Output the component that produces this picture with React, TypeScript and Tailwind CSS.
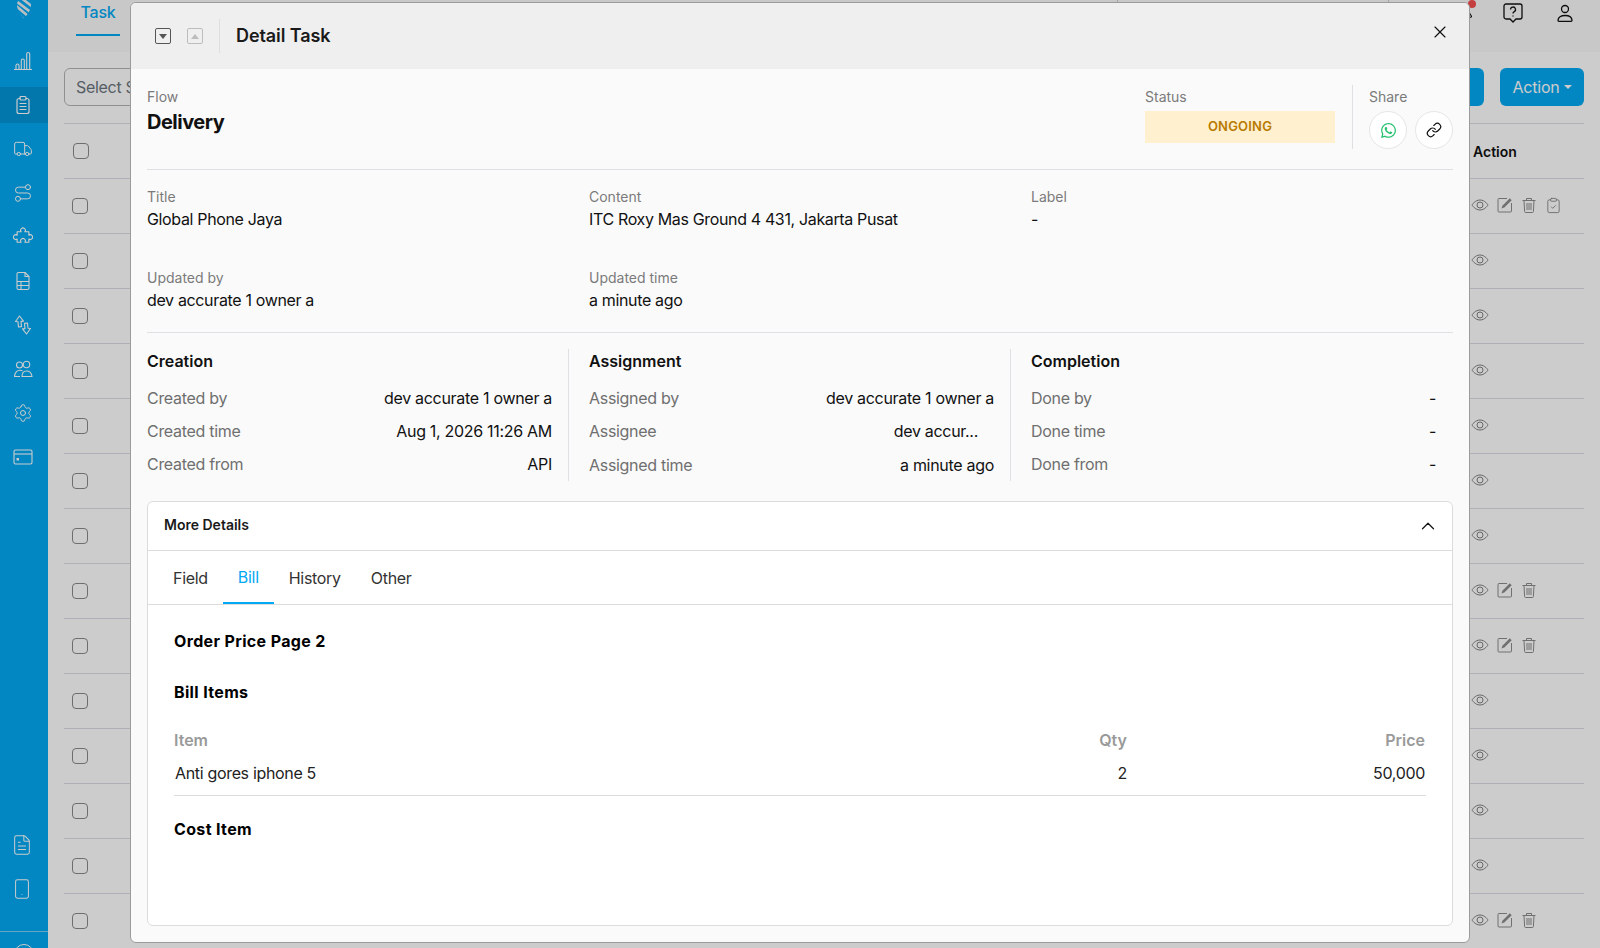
import { ChevronUp, ClipboardCheck, FileText, Link, Settings, Smartphone, Bell, Route, Truck, X } from "lucide-react";
import { FaWhatsapp } from "react-icons/fa";

const BarsIcon = () => (
  <svg width="20" height="20" viewBox="0 0 20 20" fill="none" stroke="currentColor" strokeWidth="1.1">
    <path d="M1 18.500h18M3 18.500v-4a1.500 1.500 0 0 1 3 0v4M8.300 18.500V9.500a1.500 1.500 0 0 1 3 0v9M13.700 18.500V3a1.500 1.500 0 0 1 3 0v15.500" />
  </svg>
);

const ClipboardIcon = () => (
  <svg width="20" height="20" viewBox="0 0 20 20" fill="none" stroke="currentColor" strokeWidth="1.2" strokeLinecap="round">
    <path d="M7 3.500H6a2 2 0 0 0-2 2v11a2 2 0 0 0 2 2h8a2 2 0 0 0 2-2v-11a2 2 0 0 0-2-2h-1" />
    <rect x="7" y="1.500" width="6" height="3.500" rx="1" />
    <path d="M7 8.500h6M7 11.500h6M7 14.500h6" />
  </svg>
);

const PuzzleIcon = () => (
  <svg width="20" height="20" viewBox="1.500 1.500 17 17" fill="none" stroke="currentColor" strokeWidth="0.95" strokeLinejoin="round">
    <path d="M5 5.500h3.400a2 2 0 1 1 3.200 0H15v3a2 2 0 1 1 0 3.200v2.800h-3.400a2 2 0 1 0-3.200 0H5v-2.800a2 2 0 1 1 0-3.200z" />
  </svg>
);

const FileTableIcon = () => (
  <svg width="20" height="20" viewBox="0 0 20 20" fill="none" stroke="currentColor" strokeWidth="1.1" strokeLinejoin="round">
    <path d="M5.500 1.500H12l4 4v11.500a1.500 1.500 0 0 1-1.500 1.500h-9A1.500 1.500 0 0 1 4 17V3a1.500 1.500 0 0 1 1.500-1.500z" />
    <path d="M12 1.500v4h4M4 10.500h12M4 14.500h12M8 10.500v8" />
  </svg>
);

const SwapIcon = () => (
  <svg width="20" height="20" viewBox="0 0 20 20" fill="none" stroke="currentColor" strokeWidth="1.1" strokeLinejoin="round">
    <path d="M6.500 1 2.500 6.500 5 6.800 5.500 12l3-.4-.5-5.200 2.500-.3z" />
    <path d="M13.500 19l4-5.500-2.500-.3-.5-5.200-3 .4.500 5.200-2.500.3z" />
  </svg>
);

const UsersIcon = () => (
  <svg width="20" height="20" viewBox="0 0 20 20" fill="none" stroke="currentColor" strokeWidth="1.1" strokeLinejoin="round">
    <circle cx="6.500" cy="6" r="3" />
    <circle cx="13.500" cy="5.500" r="3.200" />
    <path d="M9 17.500c0-3.500 2-5.500 4.500-5.500s5 2 5.500 5.500z" />
    <path d="M9.500 11.800c-.8-.4-1.600-.6-2.500-.6-3 0-5 2.300-5.500 6.300H7" />
  </svg>
);

const CardIcon = () => (
  <svg width="20" height="20" viewBox="0 0 20 20" fill="none" stroke="currentColor" strokeWidth="1.1">
    <rect x="1" y="3" width="18" height="14" rx="1.500" />
    <path d="M1 7h18" />
    <rect x="3.500" y="11" width="2.500" height="2.500" fill="currentColor" stroke="none" />
  </svg>
);

const Logo = () => (
  <svg width="18" height="20" viewBox="0 0 18 20" fill="none">
    <defs>
      <clipPath id="logo-shape">
        <path d="M2 4.500C2-3.500 16-3.500 16 4.500c0 6-4 10.500-7 14-3-3.500-7-8-7-14z" />
      </clipPath>
    </defs>
    <g clipPath="url(#logo-shape)" stroke="#e8eef2" strokeWidth="2.600">
      <path d="M0 1 8-5M-1 8 13-3M1 13 17 1M5 16l13-11M8 21l10-10" transform="matrix(-1 0 0 1 18 0)" />
    </g>
  </svg>
);

const HelpIcon = () => (
  <svg width="22" height="22" viewBox="0 0 22 22" fill="none" stroke="currentColor" strokeWidth="1.3">
    <path d="M4 2h14a2 2 0 0 1 2 2v11a2 2 0 0 1-2 2h-4l-3 3-3-3H4a2 2 0 0 1-2-2V4a2 2 0 0 1 2-2z" />
    <path d="M8.500 7.500a2.500 2.500 0 1 1 3.500 2.300c-.7.3-1 .8-1 1.700" />
    <path d="M11 13.500v1" />
  </svg>
);

const PersonIcon = () => (
  <svg width="20" height="20" viewBox="0 0 20 20" fill="none" stroke="currentColor" strokeWidth="1.3" strokeLinejoin="round">
    <circle cx="10" cy="6" r="3.500" />
    <path d="M3 17.500c0-3.200 3-5 7-5s7 1.800 7 5c0 .5-.5.8-1 .8H4c-.5 0-1-.3-1-.8z" />
  </svg>
);

const EyeIcon = () => (
  <svg width="18" height="18" viewBox="0 0 18 18" fill="none" stroke="currentColor" strokeWidth="1">
    <path d="M1 9s3-5 8-5 8 5 8 5-3 5-8 5-8-5-8-5z" />
    <circle cx="9" cy="9" r="3" />
  </svg>
);

const EditIcon = () => (
  <svg width="16" height="16" viewBox="0 0 16 16" fill="none" stroke="#8c8c8c" strokeWidth="1">
    <path d="M10 1.500H2a1 1 0 0 0-1 1v11.500a1 1 0 0 0 1 1h11.500a1 1 0 0 0 1-1V6" />
    <path d="M4.500 11.500l.9-2.800L12.800 1.300l1.900 1.900-7.400 7.400z" fill="#8c8c8c" stroke="none" />
  </svg>
);

const TrashIcon = () => (
  <svg width="16" height="16" viewBox="0 0 16 16" fill="none" stroke="#8c8c8c" strokeWidth="1">
    <path d="M1.500 3.500h13M5.500 3.500V1.500h5v2M3 3.500l.6 11a1 1 0 0 0 1 1h6.800a1 1 0 0 0 1-1l.6-11M6 6v7M8 6v7M10 6v7" />
  </svg>
);

const navTop = [
  { icon: <BarsIcon /> },
  { icon: <ClipboardIcon />, active: true },
  { icon: <Truck size={20} strokeWidth={1.2} /> },
  { icon: <Route size={20} strokeWidth={1.2} /> },
  { icon: <PuzzleIcon /> },
  { icon: <FileTableIcon /> },
  { icon: <SwapIcon /> },
  { icon: <UsersIcon /> },
  { icon: <Settings size={20} strokeWidth={1.2} /> },
  { icon: <CardIcon /> },
];

// 0 = eye only, 1 = eye/edit/trash, 2 = all four
const rows = [2, 0, 0, 0, 0, 0, 0, 1, 1, 0, 0, 0, 0, 1];

const Sidebar = () => (
  <aside className="w-12 h-[948px] shrink-0 bg-[#03a9f4] text-white flex flex-col overflow-hidden">
    <div className="h-[43px] flex justify-center shrink-0 pr-px">
      <Logo />
    </div>
    <div className="flex flex-col gap-2">
      {navTop.map((item, i) => (
        <div
          key={i}
          className={`h-9 flex items-center justify-center pr-[2px] ${item.active ? "bg-[#0295d8]" : ""}`}
        >
          {item.icon}
        </div>
      ))}
    </div>
    <div className="mt-auto flex flex-col gap-2">
      <div className="h-9 flex items-center justify-center pr-1">
        <FileText size={22} strokeWidth={1.1} />
      </div>
      <div className="h-9 flex items-center justify-center pr-1">
        <Smartphone size={22} strokeWidth={1.1} />
      </div>
      <div className="mt-4 border-t border-[#7fd0f5] h-[17px] flex justify-center">
        <div className="mt-3 w-5 h-5 shrink-0 rounded-full border border-white" />
      </div>
    </div>
  </aside>
);

const Background = () => (
  <main className="flex-1 min-w-0 h-[948px] overflow-hidden bg-white">
    <div className="h-[52px] bg-[#fafafa] flex items-start pl-7 pr-[25px]">
      <div className="w-11 h-9 border-b-2 border-[#03a9f4] text-[16px] leading-6 tracking-[-0.2px] font-medium text-center text-[#03a9f4]">
        Task
      </div>
      <span className="ml-[997px] h-9 border-l border-[#d0d0d0]" />
      <span className="ml-[270px] h-9 border-l border-[#d0d0d0]" />
      <div className="ml-auto h-[26px] flex items-center text-[#111]">
        <span className="relative">
          <Bell size={20} strokeWidth={1.3} />
          <span className="absolute left-[14px] -top-[3px] w-2 h-2 rounded-full bg-[#f55050]" />
        </span>
        <span className="ml-7">
          <HelpIcon />
        </span>
        <span className="ml-[31px]">
          <PersonIcon />
        </span>
      </div>
    </div>
    <div className="mt-4 px-4 flex gap-4 h-[38px]">
      <div className="w-[300px] border border-[#b5b5b5] rounded-md pl-[11px] flex items-center text-[16px] tracking-[-0.3px] text-[#6c757d]">
        Select S
      </div>
      <div className="ml-auto w-[100px] rounded-md bg-[#03a9f4]" />
      <div className="w-[84px] rounded-md bg-[#03a9f4] flex items-center justify-center gap-1 text-[16px] tracking-[-0.2px] text-white">
        Action
        <span className="w-0 h-0 border-x-4 border-x-transparent border-t-4 border-t-white" />
      </div>
    </div>
    <div className="mt-[17px] mx-4 border-t border-[#dcdde6]">
      <div className="h-[55px] border-b border-[#dcdde6] flex items-center justify-between">
        <span className="ml-[9px] w-4 h-4 rounded-[4px] border border-[#8a8a8a] bg-white" />
        <span className="w-[116px] pl-[5px] text-[14px] font-semibold text-[#111]">Action</span>
      </div>
      {rows.map((kind, i) => (
        <div key={i} className="h-[55px] border-b border-[#dcdde6] flex items-center justify-between">
          <span className="ml-2 w-4 h-4 rounded-[4px] border border-[#8a8a8a] bg-white" />
          <div className="w-[116px] mb-[2px] flex items-center text-[#808080]">
            <span className="w-[24.5px] flex justify-center">
              <EyeIcon />
            </span>
            {kind > 0 && (
              <>
                <span className="w-[24.5px] flex justify-center">
                  <EditIcon />
                </span>
                <span className="w-[24.5px] flex justify-center">
                  <TrashIcon />
                </span>
              </>
            )}
            {kind > 1 && (
              <span className="w-[24.5px] flex justify-center">
                <ClipboardCheck size={17} strokeWidth={1.2} />
              </span>
            )}
          </div>
        </div>
      ))}
    </div>
  </main>
);

const Field = ({ label, value }: { label: string; value: string }) => (
  <div>
    <div className="h-5 text-[14px] leading-5 text-[#7a7a7a]">{label}</div>
    <div className="h-6 text-[16px] leading-6 tracking-[-0.35px] text-[#111]">{value}</div>
  </div>
);

const DetailColumn = ({
  title,
  items,
  className,
}: {
  title: string;
  items: [string, string][];
  className: string;
}) => (
  <div className={className}>
    <div className="h-6 text-[16px] leading-6 font-semibold text-[#111]">{title}</div>
    <div className="mt-[13px] flex flex-col gap-[9px]">
      {items.map(([label, value]) => (
        <div
          key={label}
          className={`h-6 flex justify-between text-[16px] leading-6 tracking-[-0.3px] ${
            label === "Assigned time" ? "mt-px" : ""
          }`}
        >
          <span className="text-[#6f6f6f]">{label}</span>
          <span className={`text-[#111] ${value === "dev accur..." ? "pr-4" : ""}`}>{value}</span>
        </div>
      ))}
    </div>
  </div>
);

const Modal = () => (
  <div className="absolute left-[130px] top-[2px] w-[1340px] h-[941px] rounded-md bg-[#fafafa] border border-[#9b9b9b] flex flex-col overflow-hidden">
    <header className="h-[66px] shrink-0 bg-[#efefef] flex items-center pl-6 pr-[19px]">
      <span className="w-4 h-4 rounded-[2px] border border-[#555] flex items-center justify-center">
        <span className="w-0 h-0 border-x-[4px] border-x-transparent border-t-[5px] border-t-[#555]" />
      </span>
      <span className="ml-4 w-4 h-4 rounded-[2px] border border-[#bdbdbd] flex items-center justify-center">
        <span className="w-0 h-0 border-x-[4px] border-x-transparent border-b-[5px] border-b-[#bdbdbd]" />
      </span>
      <span className="ml-4 h-[34px] border-l border-[#dedede]" />
      <h2 className="ml-4 mb-[2px] text-[18px] font-semibold tracking-[-0.1px] text-[#1a1a1a]">Detail Task</h2>
      <X size={20} strokeWidth={1.4} className="ml-auto mb-[8px] text-[#111]" />
    </header>

    <div className="flex-1 min-h-0 px-4 flex flex-col">
      <section className="h-[101px] shrink-0 border-b border-[#e0e0e4] pt-[18px] flex">
        <div className="flex-1">
          <div className="h-5 text-[14px] leading-5 text-[#7a7a7a]">Flow</div>
          <div className="mt-px h-7 text-[20px] leading-7 font-bold tracking-[-0.5px] text-[#111]">Delivery</div>
        </div>
        <div className="w-[190px]">
          <div className="h-5 text-[14px] leading-5 text-[#7a7a7a]">Status</div>
          <div className="mt-[4px] h-8 bg-[#fff1cf] flex items-center justify-center text-[13px] font-semibold tracking-[0.2px] text-[#b97a00]">
            ONGOING
          </div>
        </div>
        <div className="ml-[17px] mr-4 h-16 -mt-[2px] border-l border-[#e0e0e4]" />
        <div className="w-[84px]">
          <div className="h-5 text-[14px] leading-5 text-[#7a7a7a]">Share</div>
          <div className="mt-[4px] flex gap-2">
            <span className="w-[38px] h-[38px] rounded-full bg-white border border-[#e6e6e6] flex items-center justify-center text-[#25c16f]">
              <FaWhatsapp size={17} />
            </span>
            <span className="w-[38px] h-[38px] rounded-full bg-white border border-[#e6e6e6] flex items-center justify-center text-[#111]">
              <Link size={16} strokeWidth={1.8} />
            </span>
          </div>
        </div>
      </section>

      <section className="h-[163px] shrink-0 border-b border-[#e0e0e4] pt-[17px] grid grid-cols-[442px_442px_1fr] gap-y-[37px] content-start">
        <Field label="Title" value="Global Phone Jaya" />
        <Field label="Content" value="ITC Roxy Mas Ground 4 431, Jakarta Pusat" />
        <Field label="Label" value="-" />
        <Field label="Updated by" value="dev accurate 1 owner a" />
        <Field label="Updated time" value="a minute ago" />
      </section>

      <section className="mt-4 h-[132px] shrink-0 flex">
        <DetailColumn
          title="Creation"
          className="w-[422px] pr-4 border-r border-[#e0e0e4]"
          items={[
            ["Created by", "dev accurate 1 owner a"],
            ["Created time", "Aug 1, 2026 11:26 AM"],
            ["Created from", "API"],
          ]}
        />
        <DetailColumn
          title="Assignment"
          className="ml-5 w-[422px] pr-4 border-r border-[#e0e0e4]"
          items={[
            ["Assigned by", "dev accurate 1 owner a"],
            ["Assignee", "dev accur..."],
            ["Assigned time", "a minute ago"],
          ]}
        />
        <DetailColumn
          title="Completion"
          className="ml-5 flex-1 pr-[17px]"
          items={[
            ["Done by", "-"],
            ["Done time", "-"],
            ["Done from", "-"],
          ]}
        />
      </section>

      <section className="mt-5 h-[425px] shrink-0 rounded-md border border-[#dcdcdc] bg-white flex flex-col">
        <div className="h-[49px] shrink-0 border-b border-[#dcdcdc] flex items-center justify-between pl-4 pr-[13px]">
          <span className="mb-1 text-[14px] font-semibold text-[#1a1a1a]">More Details</span>
          <ChevronUp size={22} strokeWidth={1.3} className="text-[#111]" />
        </div>
        <div className="h-[54px] shrink-0 border-b border-[#dcdcdc] pl-[10px] flex text-[16px] tracking-[-0.3px] text-[#333]">
          <span className="h-[53px] px-[15px] flex items-center">Field</span>
          <span className="h-[53px] px-[15px] flex items-center border-b-2 border-[#03a9f4] text-[#03a9f4]">Bill</span>
          <span className="h-[53px] px-[15px] flex items-center">History</span>
          <span className="h-[53px] px-[15px] flex items-center">Other</span>
        </div>
        <div className="px-[26px] pt-6 text-[16px] leading-6">
          <h3 className="font-bold tracking-[0.35px] text-black">Order Price Page 2</h3>
          <h3 className="mt-[27px] font-bold tracking-[0.35px] text-black">Bill Items</h3>
          <div className="mt-6 grid grid-cols-[853px_100px_1fr]">
            <span className="font-semibold text-[#9a9a9a]">Item</span>
            <span className="text-right font-semibold text-[#9a9a9a]">Qty</span>
            <span className="text-right pr-px font-semibold text-[#9a9a9a]">Price</span>
          </div>
          <div className="mt-[9px] pb-[10px] border-b border-[#dcdcdc] grid grid-cols-[853px_100px_1fr] tracking-[-0.33px] text-[#222]">
            <span className="pl-px">Anti gores iphone 5</span>
            <span className="text-right">2</span>
            <span className="text-right pr-px">50,000</span>
          </div>
          <h3 className="mt-[21px] font-bold tracking-[0.35px] text-black">Cost Item</h3>
        </div>
      </section>
    </div>
  </div>
);

export default function App() {
  return (
    <div className="relative w-[1600px] h-[948px] overflow-hidden flex font-['Inter',sans-serif]">
      <Sidebar />
      <Background />
      <div className="absolute inset-0 bg-black/20" />
      <Modal />
    </div>
  );
}
